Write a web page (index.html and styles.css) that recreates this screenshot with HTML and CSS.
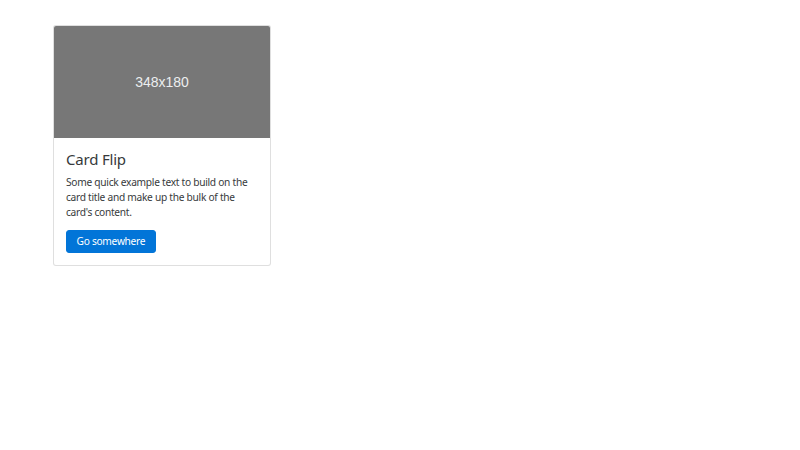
FILE: index.html
```html
<!DOCTYPE html>
<html>
<head>
<meta charset="utf-8">
<link rel="stylesheet" href="styles.css">
</head>
<body>
<div class="page">
  <div class="card">
    <div class="card-img">348x180</div>
    <div class="card-body">
      <h5 class="card-title">Card Flip</h5>
      <p class="card-text">Some quick example text to build on the card title and make up the bulk of the card's content.</p>
      <a class="btn" href="#">Go somewhere</a>
    </div>
  </div>
</div>
</body>
</html>
```
FILE: styles.css
```css
html, body {
  margin: 0;
  padding: 0;
  background: #fff;
}
body {
  font-family: "Noto Sans", "Open Sans", sans-serif;
  font-size: 10px;
  line-height: 1.5;
  color: #373a3c;
}
.page {
  padding: 25px 0 0 53px;
}
.card {
  width: 216px;
  border: 1px solid rgba(0,0,0,.125);
  border-radius: 3px;
  overflow: hidden;
  background: #fff;
}
.card-img {
  height: 112px;
  background: #777;
  color: #eceeef;
  font-family: "Liberation Sans", Arial, sans-serif;
  font-size: 14px;
  display: flex;
  align-items: center;
  justify-content: center;
}
.card-body {
  padding: 12px 12px 12.5px;
}
.card-title {
  margin: 0 0 7px;
  font-size: 15px;
  letter-spacing: -0.2px;
  font-weight: 400;
  line-height: 1.2;
}
.card-text {
  margin: 0 0 10px;
  font-size: 10.2px;
  letter-spacing: -0.28px;
  line-height: 15px;
}
.btn {
  display: inline-block;
  padding: 3px 9.5px;
  border: 1px solid #0275d8;
  border-radius: 3px;
  background: #0275d8;
  color: #fff;
  text-decoration: none;
  font-size: 10.2px;
  letter-spacing: -0.28px;
  line-height: 14.5px;
}
```
